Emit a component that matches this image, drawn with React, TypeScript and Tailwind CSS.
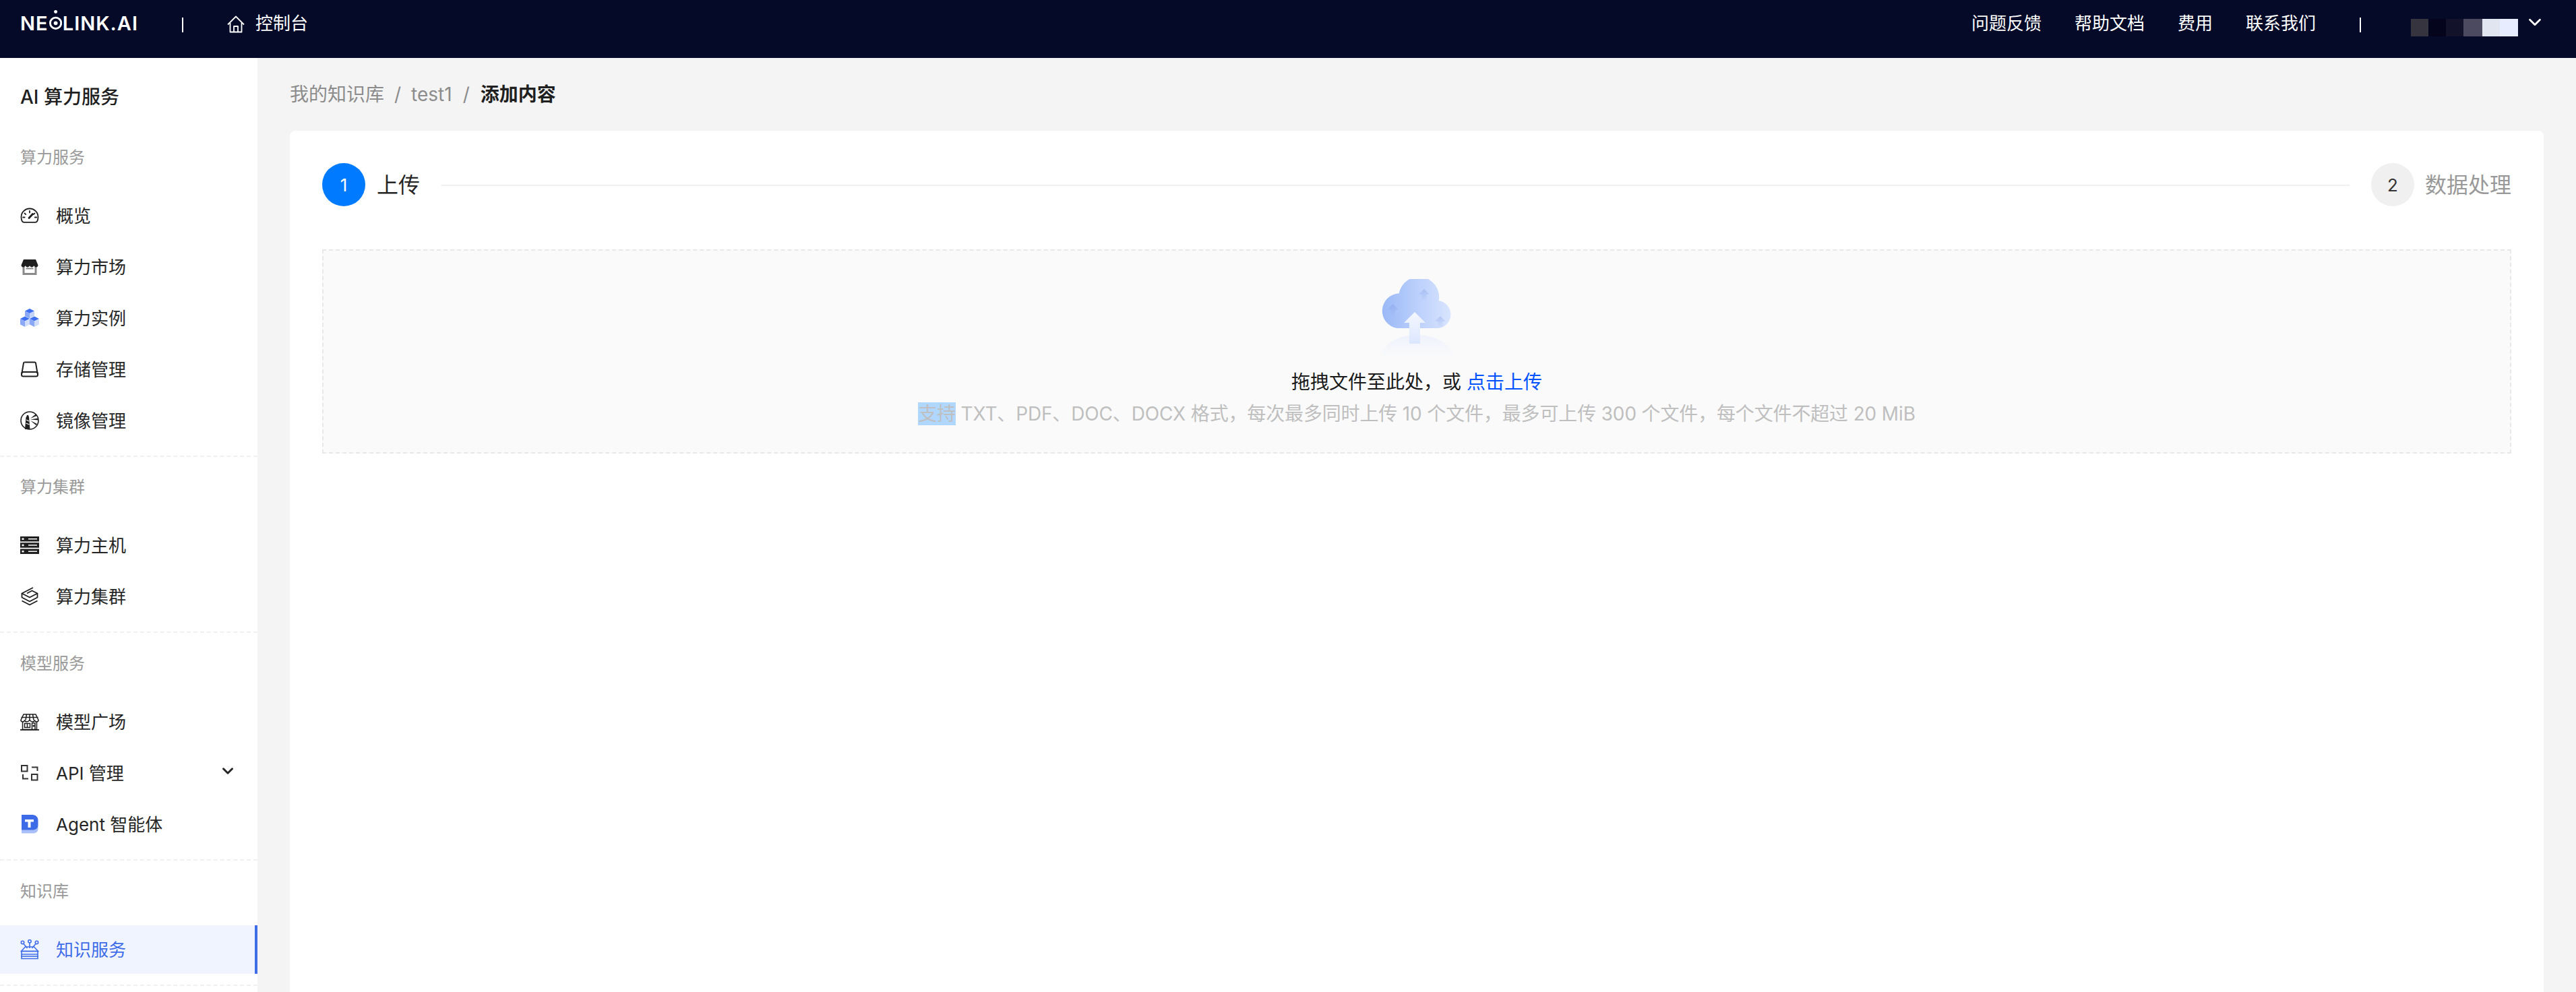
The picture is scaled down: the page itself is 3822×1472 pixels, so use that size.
import React from 'react';
import { ChevronDown } from 'lucide-react';

function GaugeIcon() {
  return (
    <svg width="28" height="24" viewBox="0 0 28 24" fill="none" stroke="#1f1f1f" strokeWidth="1.8">
      <path d="M14 1.5A12.5 12.5 0 0 0 1.5 14c0 2.8.4 4.8 1.3 6.2.6 1 1.4 1.6 2.7 1.6h17c1.3 0 2.1-.6 2.7-1.6.9-1.4 1.3-3.4 1.3-6.2A12.5 12.5 0 0 0 14 1.5Z" />
      <path d="M14 5v2.5M6.5 8.5l1.7 1.6M4.2 14.5h2.4M21.8 14.5h2.4M21.5 8.5l-1.7 1.6" strokeLinecap="round" />
      <path d="M18.5 9.5 13 15.5" strokeWidth="2.8" strokeLinecap="round" />
    </svg>
  );
}

function StoreFilledIcon() {
  return (
    <svg width="28" height="24" viewBox="0 0 28 24" fill="none">
      <path d="M5 12v10.5h18V12" stroke="#8a8a8a" strokeWidth="3" />
      <path d="M8.5 14.5h11" stroke="#8a8a8a" strokeWidth="2" />
      <path d="M5 1h18l3.5 8.5c0 2-1.500 3-3 3s-2.800-1-3.200-2.200c-.4 1.200-1.800 2.200-3.200 2.200s-2.700-1-3.100-2.200c-.4 1.200-1.700 2.200-3.100 2.200s-2.800-1-3.200-2.200c-.4 1.200-1.700 2.200-3.200 2.200s-3-1-3-3Z" fill="#1f1f1f" />
    </svg>
  );
}

function CubesIcon() {
  return (
    <svg width="28" height="28" viewBox="0 0 28 28">
      <path d="M14 0l7 3.500-7 3.500-7-3.500Z" fill="#3d6ff0" />
      <path d="M7 3.500l7 3.500v7.500l-7-3.500Z" fill="#8aa8f5" />
      <path d="M21 3.500 14 7v7.500l7-3.500Z" fill="#c2d2fb" />
      <path d="M7 11.500l7 3.500-7 3.500-7-3.500Z" fill="#3d6ff0" />
      <path d="M0 15l7 3.500V27l-7-3.500Z" fill="#8aa8f5" />
      <path d="M14 15l-7 3.500V27l7-3.500Z" fill="#cfdcfc" />
      <path d="M21 11.500l7 3.500-7 3.500-7-3.500Z" fill="#3d6ff0" />
      <path d="M14 15l7 3.500V27l-7-3.500Z" fill="#8aa8f5" />
      <path d="M28 15l-7 3.500V27l7-3.500Z" fill="#cfdcfc" />
    </svg>
  );
}

function DriveIcon() {
  return (
    <svg width="28" height="24" viewBox="0 0 28 24" fill="none" stroke="#1f1f1f" strokeWidth="2">
      <path d="M6.500 1.500h15c.8 0 1.300.4 1.500 1.200l2.600 15.300" />
      <path d="M6.500 1.500c-.8 0-1.300.4-1.500 1.200L2.400 18" />
      <rect x="2" y="16" width="24" height="6.500" rx="2.500" />
    </svg>
  );
}

function MirrorIcon() {
  return (
    <svg width="28" height="28" viewBox="0 0 28 28" fill="none">
      <circle cx="14" cy="14" r="13" stroke="#1f1f1f" strokeWidth="1.600" />
      <path d="M8.500 9h4.500l1.500 18h-7.500Z" fill="#1f1f1f" />
      <path d="M10 6h2l1 3H9Z" fill="#1f1f1f" />
      <path d="M9 13l4 2M8.500 18l5 2" stroke="#ffffff" strokeWidth="1.200" />
      <path d="M15 11 23 4.500 24.500 7Z M15 12.500 27 10.500v3Z M15 14 25 19l-1.500 2Z" fill="#1f1f1f" />
    </svg>
  );
}

function ServerIcon() {
  return (
    <svg width="28" height="26" viewBox="0 0 28 26">
      <rect width="28" height="7.500" fill="#1f1f1f" />
      <rect y="9.250" width="28" height="7.500" fill="#1f1f1f" />
      <rect y="18.500" width="28" height="7.500" fill="#1f1f1f" />
      <g fill="#ffffff">
        <rect x="2.500" y="2.500" width="3" height="2.500" />
        <rect x="2.500" y="11.750" width="3" height="2.500" />
        <rect x="2.500" y="21" width="3" height="2.500" />
        <rect x="12" y="3" width="13" height="1.500" />
        <rect x="12" y="12.250" width="13" height="1.500" />
        <rect x="12" y="21.500" width="13" height="1.500" />
      </g>
    </svg>
  );
}

function LayersIcon() {
  return (
    <svg width="26" height="28" viewBox="0 0 26 28" fill="none" stroke="#1f1f1f" strokeWidth="1.800" strokeLinejoin="round">
      <path d="M18 1 1.500 9.500 13 15.500l11.500-6-8-4L9 9.500" />
      <path d="M1.500 9.500v6L13 21.500l11.500-6v-6" />
      <path d="M1.500 20.500 13 26.500l11.500-6" />
    </svg>
  );
}

function ShopIcon() {
  return (
    <svg width="28" height="25" viewBox="0 0 28 25" fill="none" stroke="#1f1f1f" strokeWidth="1.500">
      <path d="M5 1h18l4 8.500c0 1.600-1.300 2.500-2.700 2.500s-2.600-.9-2.900-2.500c-.3 1.600-1.600 2.500-3.200 2.500S15.300 11.100 14 9.500C12.700 11.100 11.400 12 9.800 12S6.900 11.100 6.600 9.500C6.300 11.100 5.100 12 3.700 12S1 11.100 1 9.500Z" />
      <path d="M9.500 1 8 9.500M14 1v8.500M18.500 1 20 9.500M1.500 5.500h25" />
      <path d="M3.500 12v11.500h21V12" />
      <path d="M0 24h28" strokeWidth="1.800" />
      <rect x="6.500" y="14.500" width="8" height="6" />
      <path d="M10.500 14.500v6M17.500 23.500V14h4.500v9.500" />
      <circle cx="20" cy="18" r=".8" fill="#1f1f1f" />
    </svg>
  );
}

function ApiIcon() {
  return (
    <svg width="26" height="24" viewBox="0 0 26 24" fill="none" stroke="#333333" strokeWidth="2">
      <rect x="1" y="1" width="8.500" height="8.500" />
      <rect x="16" y="14" width="8.500" height="8.500" />
      <path d="M16 3.500h8.500V9M3 14v6.500h8" />
    </svg>
  );
}

function AgentIcon() {
  return (
    <svg width="26" height="28" viewBox="0 0 26 28">
      <path d="M1 20h16c5 0 8.500-1 8.500-4v5c0 4-3 6.500-7.500 6.500H1Z" fill="#a9bff7" />
      <path d="M1 0h16c5 0 8.500 3.500 8.500 8.500v7c0 4.500-3.500 7-8.500 7H1Z" fill="#3d6ae6" />
      <path d="M6 7h13v3.500h-4.500V19h-4v-8.500H6Z" fill="#ffffff" />
    </svg>
  );
}

function KnowledgeIcon() {
  return (
    <svg width="28" height="30" viewBox="0 0 28 30" fill="none" stroke="#3f6de8" strokeWidth="1.600">
      <circle cx="3.500" cy="4.500" r="2.200" />
      <circle cx="14" cy="2.800" r="2.200" />
      <circle cx="24.500" cy="4.500" r="2.200" />
      <path d="M5 6.500 10.500 13M14 5v8M23 6.500 17.500 13" />
      <path d="M7.500 11h13l6 6.500H1.500Z" />
      <path d="M2 17.500h24v4.500H2ZM2 22h24v6.500H2Z" />
      <path d="M1 25h26" />
    </svg>
  );
}

function UploadCloud() {
  return (
    <svg width="120" height="120" viewBox="0 0 120 120">
      <defs>
        <linearGradient id="cloud" x1="0" y1="0" x2="1" y2="0">
          <stop offset="0" stopColor="#9bb9f7" />
          <stop offset="1" stopColor="#d9e5ff" />
        </linearGradient>
        <linearGradient id="arrow" x1="0" y1="0" x2="0" y2="1">
          <stop offset="0" stopColor="#f4f7ff" />
          <stop offset="1" stopColor="#dbe6ff" />
        </linearGradient>
        <linearGradient id="small" x1="0" y1="0" x2="0" y2="1">
          <stop offset="0" stopColor="#6f8fe0" stopOpacity="0.3" />
          <stop offset="1" stopColor="#6f8fe0" stopOpacity="0" />
        </linearGradient>
        <linearGradient id="shadow" x1="0" y1="0" x2="0" y2="1">
          <stop offset="0" stopColor="#eef2fc" />
          <stop offset="1" stopColor="#fafafa" />
        </linearGradient>
      </defs>
      <path d="M6 116C10 96 32 83 60 83s50 13 57 33Z" fill="url(#shadow)" />
      <path d="M31 73A26 26 0 0 1 33.700 21.300 30 30 0 0 1 92.700 32.300 20.500 20.500 0 0 1 92 73Z" fill="url(#cloud)" />
      <path d="M71 14.700 79 23H74.500V33H67.500V23H63Z" fill="url(#small)" />
      <path d="M24.700 37 32.700 45.500H28.200V56H21.200V45.500H16.700Z" fill="url(#small)" />
      <path d="M95 55 103 63H98.500V72H91.500V63H87Z" fill="url(#small)" />
      <path d="M57 49 73 65H65V95a1 1 0 0 1-1 1H50a1 1 0 0 1-1-1V65H41Z" fill="url(#arrow)" />
    </svg>
  );
}

type NavItem = { label: string; icon: React.ReactNode; active?: boolean; expandable?: boolean };
type NavGroup = { title: string; className: string; items: NavItem[] };

const groups: NavGroup[] = [
  {
    title: '算力服务',
    className: '',
    items: [
      { label: '概览', icon: <GaugeIcon /> },
      { label: '算力市场', icon: <StoreFilledIcon /> },
      { label: '算力实例', icon: <CubesIcon /> },
      { label: '存储管理', icon: <DriveIcon /> },
      { label: '镜像管理', icon: <MirrorIcon /> },
    ],
  },
  {
    title: '算力集群',
    className: 'pt-[12px]',
    items: [
      { label: '算力主机', icon: <ServerIcon /> },
      { label: '算力集群', icon: <LayersIcon /> },
    ],
  },
  {
    title: '模型服务',
    className: 'pt-[13px]',
    items: [
      { label: '模型广场', icon: <ShopIcon /> },
      { label: 'API 管理', icon: <ApiIcon />, expandable: true },
      { label: 'Agent 智能体', icon: <AgentIcon /> },
    ],
  },
  {
    title: '知识库',
    className: 'pt-[13px]',
    items: [{ label: '知识服务', icon: <KnowledgeIcon />, active: true }],
  },
];

function Sidebar() {
  return (
    <aside className="w-[382px] shrink-0 bg-white">
      <div className="flex h-[115px] items-center pl-[30px] text-[28px] font-medium text-[#1f1f1f]">AI 算力服务</div>
      {groups.map((group) => (
        <section key={group.title} className={group.className}>
          <div className="flex h-[66px] items-center pl-[30px] text-[24px] text-[#999999]">{group.title}</div>
          <ul className="mt-[17px] flex flex-col gap-[4px] pb-[16px]">
            {group.items.map((item) => (
              <li
                key={item.label}
                className={
                  item.active
                    ? 'flex h-[72px] items-center border-r-4 border-[#3f6de8] bg-[#f0f4fe] pl-[30px] text-[26px] text-[#3f6de8]'
                    : 'flex h-[72px] items-center pl-[30px] text-[26px] text-[#262626]'
                }
              >
                <span className="flex w-[28px] shrink-0 justify-center">{item.icon}</span>
                <span className="ml-[25px]">{item.label}</span>
                {item.expandable && <ChevronDown className="ml-auto mr-[31px] mt-[-6px] h-[26px] w-[26px] text-[#262626]" strokeWidth={2.800} />}
              </li>
            ))}
          </ul>
          <div className="border-t-2 border-dashed border-[#f0f0f0]" />
        </section>
      ))}
    </aside>
  );
}

function Header() {
  return (
    <header className="flex h-[86px] shrink-0 items-start bg-[#050a29] pl-[30px] pr-[46px] pt-[20px] text-[26px] leading-[30px] text-white">
      <div className="flex w-[175px] items-center text-[29px] font-semibold tracking-[1px]">
        <span>NE</span>
        <svg width="20" height="32" viewBox="0 0 20 32" className="mx-[1px] mt-[-11px]" fill="none">
          <circle cx="10" cy="3" r="2.600" fill="#ffffff" />
          <circle cx="10" cy="20.500" r="8.500" stroke="#ffffff" strokeWidth="3" />
          <circle cx="10" cy="20.500" r="3" fill="#ffffff" />
        </svg>
        <span>LINK.AI</span>
      </div>
      <div className="ml-[65px] mt-[6px] h-[22px] w-[2px] bg-white" />
      <svg width="26" height="26" viewBox="0 0 26 26" className="ml-[65px] mt-[3px]" fill="none" stroke="#ffffff" strokeWidth="1.800" strokeLinejoin="round">
        <path d="M1 13.500 13 1.500l12 12" />
        <path d="M4.500 11v13.500h17V11" />
        <path d="M10 24.500V16h6v8.500" />
      </svg>
      <span className="ml-[16px]">控制台</span>
      <nav className="ml-auto flex gap-[49px]">
        <span>问题反馈</span>
        <span>帮助文档</span>
        <span>费用</span>
        <span>联系我们</span>
      </nav>
      <div className="ml-[65px] mt-[6px] h-[22px] w-[2px] bg-white" />
      <div className="ml-[74px] mt-[8px] flex h-[26px]">
        <div className="w-[26px] bg-[#35343f]" />
        <div className="w-[26px] bg-[#04041c]" />
        <div className="w-[26px] bg-[#12122a]" />
        <div className="w-[28px] bg-[#4b4a60]" />
        <div className="w-[26px] bg-[#e1e5f0]" />
        <div className="w-[27px] bg-[#e8ecff]" />
      </div>
      <ChevronDown className="ml-[10px] mt-[-2px] h-[30px] w-[30px]" strokeWidth={2.200} />
    </header>
  );
}

function Breadcrumb() {
  return (
    <div className="flex h-[108px] shrink-0 items-center text-[28px] text-[#8c8c8c]">
      <span>我的知识库</span>
      <span className="mx-[15px]">/</span>
      <span>test1</span>
      <span className="mx-[16px]">/</span>
      <span className="font-semibold text-[#1f1f1f]">添加内容</span>
    </div>
  );
}

function Steps() {
  return (
    <div className="flex h-[64px] items-center">
      <div className="flex h-[64px] w-[64px] items-center justify-center rounded-full bg-[#007aff] text-[26px] text-white">1</div>
      <span className="ml-[17px] mt-[2px] text-[32px] text-[#262626]">上传</span>
      <div className="mx-[32px] mt-[2px] h-[2px] flex-1 bg-[#f0f0f0]" />
      <div className="flex h-[64px] w-[64px] items-center justify-center rounded-full bg-[#f0f0f0] text-[26px] text-[#333333]">2</div>
      <span className="ml-[16px] mt-[2px] text-[32px] text-[#999999]">数据处理</span>
    </div>
  );
}

function Dropzone() {
  return (
    <div className="mt-[64px] flex h-[303px] flex-col items-center border-2 border-dashed border-[#e8e8e8] bg-[#fafafa] pt-[42px]">
      <UploadCloud />
      <div className="mt-[13px] text-[28px] leading-[40px] text-[#1a1a1a]">
        拖拽文件至此处，或 <span className="text-[#0052ff]">点击上传</span>
      </div>
      <div className="mt-[11px] text-[28px] leading-[32px] tracking-[-0.15px] text-[#bfbfbf]">
        <span className="bg-[#b0d7ff]">支持</span> TXT、PDF、DOC、DOCX 格式，每次最多同时上传 10 个文件，最多可上传 300 个文件，每个文件不超过 20 MiB
      </div>
    </div>
  );
}

export default function App() {
  return (
    <div className="flex h-screen flex-col overflow-hidden bg-[#f4f4f4] font-[Inter,'Noto_Sans_CJK_SC',sans-serif]">
      <Header />
      <div className="flex min-h-0 flex-1">
        <Sidebar />
        <main className="flex min-w-0 flex-1 flex-col px-[48px]">
          <Breadcrumb />
          <div className="flex-1 rounded-t-lg bg-white px-[48px] pt-[48px]">
            <Steps />
            <Dropzone />
          </div>
        </main>
      </div>
    </div>
  );
}
